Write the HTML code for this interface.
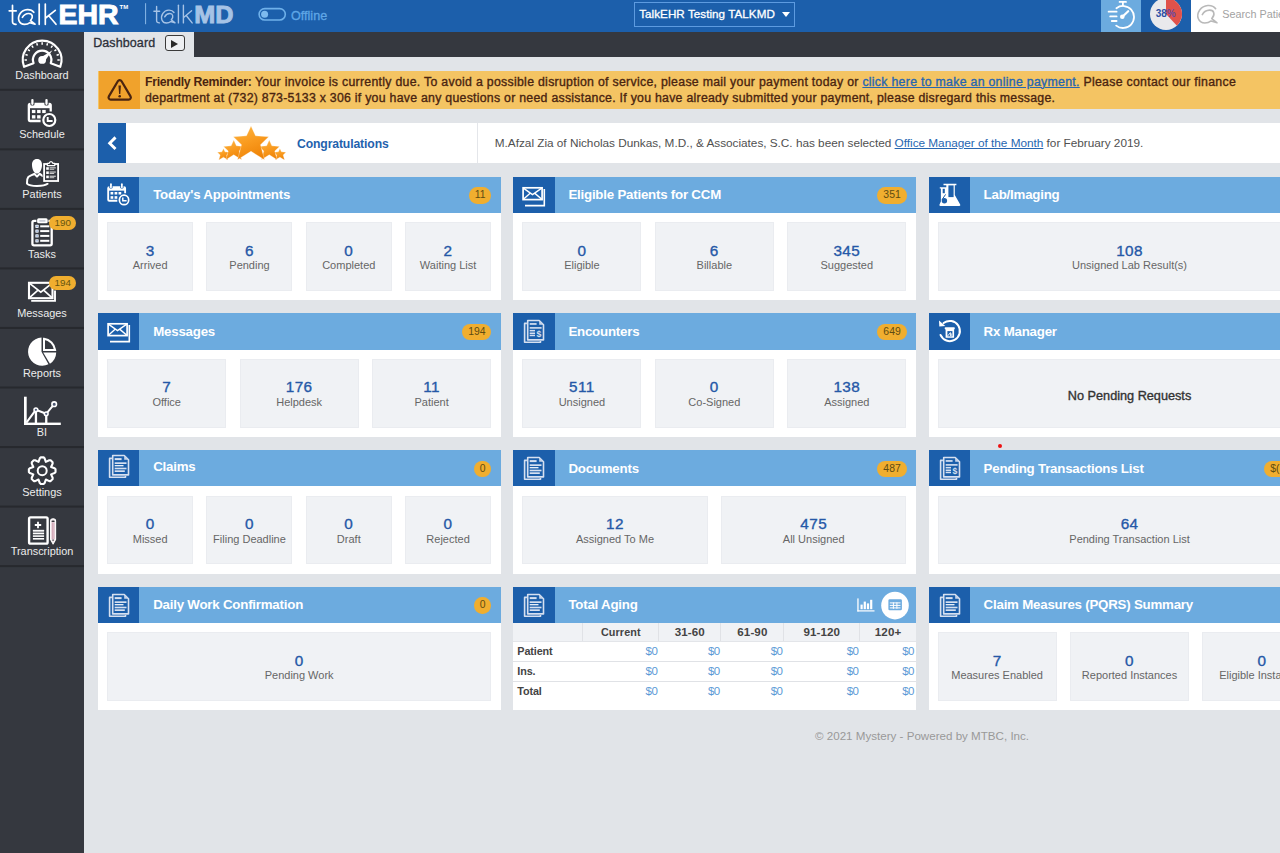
<!DOCTYPE html>
<html>
<head>
<meta charset="utf-8">
<title>talkEHR Dashboard</title>
<style>
*{box-sizing:border-box;margin:0;padding:0}
html,body{width:1280px;height:853px;overflow:hidden}
body{background:#e1e4e8;font-family:"Liberation Sans",sans-serif;position:relative;color:#333}
.abs{position:absolute}
#top{position:absolute;left:0;top:0;width:1280px;height:32px;background:#1c5fab}
#side{position:absolute;left:0;top:32px;width:84px;height:821px;background:#35383f}
#tabbar{position:absolute;left:84px;top:32px;width:1196px;height:25px;background:#35383f}
#tab{position:absolute;left:0;top:0;width:110px;height:25px;background:#e1e4e8;font-size:12.5px;color:#2b2f38;-webkit-text-stroke:0.3px #2b2f38}
#tab span{position:absolute;left:9.2px;top:4.2px;letter-spacing:.1px}
#tabbtn{position:absolute;left:81px;top:3.4px;width:20px;height:16px;border:1px solid #3a3a3a;border-radius:3px;background:#eef0f3}
#tabbtn:after{content:"";position:absolute;left:5.4px;top:3.3px;border-left:7.6px solid #2a2a2a;border-top:4px solid transparent;border-bottom:4px solid transparent}
#sel{left:634px;top:2px;width:160.5px;height:24.5px;border:1px solid #5d9be0;color:#fff;font-size:11.65px;-webkit-text-stroke:.3px #fff}
#sel span{position:absolute;left:4.2px;top:3.7px;white-space:nowrap;letter-spacing:.05px}
#sel i{position:absolute;left:146.6px;top:8.8px;border-top:5.8px solid #fff;border-left:4.2px solid transparent;border-right:4.2px solid transparent}
#timer{left:1101px;top:0;width:39.5px;height:32px;background:#6cabdf}
#search{left:1190.7px;top:0;width:90px;height:32px;background:#fff}
#search span{position:absolute;left:31.6px;top:7.8px;font-size:10.8px;line-height:13px;color:#a2a2a2;white-space:nowrap}
/* sidebar */
.si{position:absolute;left:0;width:84px;height:59.54px;border-bottom:2px solid #26282d}
#sideov{position:absolute;left:0;top:0;width:84px;height:853px}
.lb{position:absolute;left:0;width:84px;text-align:center;color:#ececec;font-size:10.9px;line-height:12px}
.sbadge{position:absolute;left:49.3px;width:26.8px;height:13.9px;border-radius:7px;background:#f0ae2f;color:#66550f;font-size:9.8px;line-height:13.9px;text-align:center}
/* banner */
#banner{position:absolute;left:98px;top:71.2px;width:1190px;height:38px;background:#f4c463}
#banner .ic{position:absolute;left:1px;top:0;width:41px;height:38px;background:#f0a22c}
#banner .tx{position:absolute;left:47px;top:2.4px;width:1180px;font-size:12.3px;line-height:16.3px;color:#4a2410;-webkit-text-stroke:0.35px #4a2410;letter-spacing:.295px;white-space:nowrap}
#banner .tx b{font-weight:bold;-webkit-text-stroke:0;letter-spacing:-.31px}
#banner .tx a{color:#2766b1;text-decoration:underline;-webkit-text-stroke:0.35px #2766b1}
/* congrats */
#cong{position:absolute;left:98px;top:122.6px;width:1190px;height:40.4px;background:#fff}
#cong .bt{position:absolute;left:0;top:0;width:27.5px;height:40.4px;background:#1c5fab}
#cong .dv{position:absolute;left:379px;top:0;width:1px;height:40.4px;background:#e4e6ea}
#cong .cg{position:absolute;left:199px;top:13.2px;font-size:12.2px;line-height:16px;letter-spacing:-.12px;font-weight:bold;color:#1f62ad}
#cong .ms{position:absolute;left:396.8px;top:12px;font-size:11.8px;line-height:16px;letter-spacing:-.02px;color:#505050;white-space:nowrap}
#cong .ms a{color:#2766b1;text-decoration:underline}
/* panels */
.p{position:absolute;width:402.4px;height:123.7px;background:#fff}
.p .h{position:absolute;left:0;top:0;width:100%;height:36.3px;background:#6cabdf}
.p .hi{position:absolute;left:0;top:0;width:41.3px;height:36.3px;background:#1c5fab}
.p .t{position:absolute;left:55px;top:10.7px;font-size:13.3px;line-height:16px;letter-spacing:-.22px;font-weight:bold;color:#fff;white-space:nowrap}
.p .b{position:absolute;right:9.2px;top:10.8px;height:16.3px;min-width:17.2px;padding:0 5.9px;border-radius:8.2px;background:#f0ae2f;color:#5e4c12;font-size:10.4px;line-height:16.5px;text-align:center}
.p .ts{position:absolute;left:9px;top:45.8px;width:383.9px;height:68.6px;display:flex;justify-content:space-between}
.tl{height:68.6px;background:#f0f2f5;border:1px solid #eaecf0;text-align:center}
.c4 .tl{width:86px}
.c3 .tl{width:119px}
.c2 .tl{width:185.2px}
.c1 .tl{width:383.9px}
.tl .n{display:block;margin-top:19.3px;font-size:15.3px;line-height:16px;letter-spacing:.4px;color:#2558a7;-webkit-text-stroke:.35px #2558a7}
.tl .l{display:block;margin-top:-.4px;font-size:11px;line-height:14px;color:#666;white-space:nowrap}
.ag{position:absolute;left:0;top:36.3px;width:402.4px}
.ag i{font-style:normal;display:block;float:left}
.ag .hr{height:19px;background:#f0f2f5;border-bottom:1px solid #e3e5e9}
.ag .hr i{height:18px;border-right:1px solid #e0e2e6;text-align:center;font-weight:bold;font-size:11.6px;line-height:18.6px;color:#444;letter-spacing:.1px}
.ag .r{height:20.25px;border-bottom:1px solid #e0e2e6;clear:both}
.ag .r b{display:block;float:left;width:70px;padding-left:3.9px;font-size:10.8px;line-height:19.8px;color:#444;letter-spacing:-.1px}
.ag .r i{text-align:right;padding-right:2px;font-size:11.5px;line-height:19.8px;color:#5b9ad6;letter-spacing:-.6px}
.tl .np{display:block;margin-top:27.8px;font-size:12.7px;line-height:16px;color:#333;-webkit-text-stroke:.35px #333}
#dot{position:absolute;left:997.55px;top:443.6px;width:4.4px;height:4.4px;border-radius:50%;background:#ee1111}
#foot{position:absolute;left:815px;top:729.1px;font-size:11.6px;color:#999;white-space:nowrap}
</style>
</head>
<body>
<div id="top">
<svg class="abs" style="left:0;top:0" width="340" height="32" viewBox="0 0 340 32">
 <defs><g id="talk" fill="none" stroke-linecap="round" stroke-linejoin="round">
  <path vector-effect="non-scaling-stroke" d="M12.5 5.4 V21.4 Q12.5 24.4 16 24.3"/><path vector-effect="non-scaling-stroke" d="M9.2 10.8 H16.2"/>
  <path id="bub" vector-effect="non-scaling-stroke" d="M33.8 12.3 C31 8.4 23.5 8.6 20.2 13.4 C16.6 18.6 19.2 24.4 24.6 24.4 C27 24.4 28.6 23.7 29.9 22.7 L35 24.2 L30.5 20.6 C33.6 17.4 32.6 13.4 28.6 13.5 C26 13.6 23.6 15.2 22.4 17.3"/>
  <path vector-effect="non-scaling-stroke" d="M39.2 4 V24.3"/>
  <path vector-effect="non-scaling-stroke" d="M45.3 4 V24.3 M45.6 18 L55.3 10.3 M49 16 L56 24.3"/>
 </g></defs>
 <use href="#talk" stroke="#fff" stroke-width="1.7"/>
 <text x="58.5" y="24.4" font-family="Liberation Sans, sans-serif" font-weight="bold" font-size="28.2" fill="#fff" stroke="#fff" stroke-width="1" textLength="60" lengthAdjust="spacingAndGlyphs">EHR</text>
 <text x="119.6" y="9" font-family="Liberation Sans, sans-serif" font-weight="bold" font-size="6" fill="#fff">TM</text>
 <rect x="145" y="3.2" width="1.1" height="21" fill="#7fb0e2"/>
 <use href="#talk" stroke="#a6c3e6" stroke-width="1.4" transform="translate(146.39 1.845) scale(.817 .867)"/>
 <text x="194.3" y="22.8" font-family="Liberation Sans, sans-serif" font-weight="bold" font-size="24" fill="#a6c3e6" stroke="#a6c3e6" stroke-width="0.9" textLength="39.2" lengthAdjust="spacingAndGlyphs">MD</text>
 <rect x="259.1" y="8.6" width="26.2" height="11.4" rx="5.7" fill="none" stroke="#6fb1ea" stroke-width="1.6"/>
 <circle cx="264.6" cy="14.3" r="3.5" fill="#7dbaee"/>
 <text x="291" y="19.8" font-family="Liberation Sans, sans-serif" font-size="12.6" fill="#5fa6e6" stroke="#5fa6e6" stroke-width=".3">Offline</text>
</svg>
<div class="abs" id="sel"><span>TalkEHR Testing TALKMD</span><i></i></div>
<div class="abs" id="timer"><svg width="40" height="32" viewBox="0 0 40 32"><g fill="none" stroke="#fff" stroke-width="1.8" stroke-linecap="round"><path d="M15.4 8.2 A11 11 0 1 1 15.2 25.6"/><path d="M18.6 1.9 H25 M21.9 2.2 V5.6"/><path d="M7.6 11.7 H15.6 M9.2 16.4 H15.6 M10.8 21 H15.6"/></g><path d="M21.4 16.8 L27.2 11.2" stroke="#fff" stroke-width="2.2" stroke-linecap="round"/><circle cx="21.3" cy="16.7" r="2.3" fill="#fff"/></svg></div>
<svg class="abs" style="left:1146px;top:0" width="40" height="32" viewBox="0 0 40 32"><circle cx="20" cy="14" r="16" fill="#e9e9ec"/><path d="M20 14 L20 -2 A16 16 0 0 1 30.95 25.67 Z" fill="#e0524b"/><text x="9.7" y="17.3" font-family="Liberation Sans, sans-serif" font-weight="bold" font-size="10" fill="#2c4fa6" letter-spacing="-0.1">38<tspan fill="#6a4aa0">%</tspan></text></svg>
<div class="abs" id="search"><svg class="abs" style="left:0;top:0" width="40" height="32" viewBox="0 0 40 32"><use href="#bub" fill="none" stroke="#b9b9b9" stroke-width="1.6" stroke-linecap="round" stroke-linejoin="round" transform="translate(-14.9 -5.8) scale(1.17 1.18)"/></svg><span>Search Patie</span></div>
</div>
<div id="side"></div>
<div id="sideov">
<svg class="abs" style="left:0;top:0" width="84" height="853" viewBox="0 0 84 853">
<rect x="0" y="88.80" width="84" height="2" fill="#27292e"/>
<rect x="0" y="148.34" width="84" height="2" fill="#27292e"/>
<rect x="0" y="207.88" width="84" height="2" fill="#27292e"/>
<rect x="0" y="267.42" width="84" height="2" fill="#27292e"/>
<rect x="0" y="326.96" width="84" height="2" fill="#27292e"/>
<rect x="0" y="386.50" width="84" height="2" fill="#27292e"/>
<rect x="0" y="446.04" width="84" height="2" fill="#27292e"/>
<rect x="0" y="505.58" width="84" height="2" fill="#27292e"/>
<rect x="0" y="565.12" width="84" height="2" fill="#27292e"/>
<path d="M24.09 66.83 A19.35 19.35 0 1 1 60.21 66.83 L50.74 63.20 A9.2 9.2 0 1 0 33.56 63.20 Z" fill="none" stroke="#fff" stroke-width="2.2" stroke-linejoin="round"/>
<path d="M24.55 59.90 L26.95 59.90 M25.41 54.46 L27.69 55.20 M27.91 49.55 L29.85 50.97 M31.80 45.66 L33.22 47.60 M36.71 43.16 L37.45 45.44 M42.15 42.30 L42.15 44.70 M47.59 43.16 L46.85 45.44 M52.50 45.66 L51.08 47.60 M56.39 49.55 L54.45 50.97 M58.89 54.46 L56.61 55.20 M59.75 59.90 L57.35 59.90" stroke="#fff" stroke-width="1.5" fill="none"/>
<circle cx="42.15" cy="59.9" r="3.9" fill="#fff"/>
<path d="M40.35 57.699999999999996 L52.4 50.2 L44.55 61.5 Z" fill="#fff"/>
<path d="M40.6 121 H30.2 Q28.85 121 28.85 119.6 V105.2 Q28.85 103.8 30.2 103.8 H49.3 Q50.7 103.8 50.7 105.2 V111.6" fill="none" stroke="#fff" stroke-width="2.3"/>
<rect x="28.8" y="103.6" width="21.9" height="4.6" fill="#fff"/>
<rect x="30.299999999999997" y="98.6" width="4.2" height="6.8" rx="1.5" fill="#35383f"/><rect x="31.25" y="98.9" width="2.3" height="6" rx="1.1" fill="#fff"/>
<rect x="44.4" y="98.6" width="4.2" height="6.8" rx="1.5" fill="#35383f"/><rect x="45.35" y="98.9" width="2.3" height="6" rx="1.1" fill="#fff"/>
<rect x="31.9" y="109.9" width="3.5" height="3.2" fill="#fff"/>
<rect x="37.1" y="109.9" width="3.5" height="3.2" fill="#fff"/>
<rect x="42.2" y="109.9" width="3.5" height="3.2" fill="#fff"/>
<rect x="31.9" y="115.2" width="3.5" height="3.3" fill="#fff"/>
<rect x="37.1" y="115.2" width="3.5" height="3.3" fill="#fff"/>
<circle cx="49.3" cy="120" r="7.6" fill="#35383f"/><circle cx="49.3" cy="120" r="6" fill="none" stroke="#fff" stroke-width="2.2"/>
<path d="M47.7 116.9 V121 H52.6" fill="none" stroke="#fff" stroke-width="1.9"/>
<path d="M37 159 C40.4 159 42.2 161.6 42 165.4 C41.8 169.6 39.6 173.6 37 173.6 C34.4 173.6 32.2 169.6 32 165.4 C31.8 161.6 33.6 159 37 159 Z" fill="#fff"/>
<path d="M42.6 176 C41.4 175 40.4 174.4 39.7 173.8 L37 176.6 L34.3 173.8 C32 175.2 29.4 175.6 28.2 177.2 C26.8 179 27 182 27 183.6 C29 185.6 33 186 37 186 C41 186 45.4 185.6 47.6 183.8" fill="none" stroke="#fff" stroke-width="2" stroke-linejoin="round" stroke-linecap="round"/>
<rect x="42.6" y="162.2" width="17.6" height="20.6" fill="#35383f"/>
<rect x="44.1" y="164" width="14" height="17" fill="none" stroke="#fff" stroke-width="1.8"/>
<path d="M47.3 165.6 V163.4 H49 Q51 160 53 163.4 H54.8 V165.6 Z" fill="#35383f" stroke="#fff" stroke-width="1.2" stroke-linejoin="round"/>
<rect x="46.2" y="167.2" width="2.6" height="2.6" fill="#fff"/><rect x="49.6" y="167.3" width="6.2" height="1.1" fill="#d8d8d8"/><rect x="49.6" y="168.8" width="4.6" height="1" fill="#c8c8c8"/>
<rect x="46.2" y="171.39999999999998" width="2.6" height="2.6" fill="#fff"/><rect x="49.6" y="171.5" width="6.2" height="1.1" fill="#d8d8d8"/><rect x="49.6" y="173.0" width="4.6" height="1" fill="#c8c8c8"/>
<rect x="46.2" y="175.6" width="2.6" height="2.6" fill="#fff"/><rect x="49.6" y="175.70000000000002" width="6.2" height="1.1" fill="#d8d8d8"/><rect x="49.6" y="177.20000000000002" width="4.6" height="1" fill="#c8c8c8"/>
<rect x="32.4" y="220.9" width="19.3" height="24.5" rx="1.6" fill="none" stroke="#fff" stroke-width="2.3"/>
<rect x="36.4" y="217.8" width="12" height="6.4" rx="1.8" fill="#35383f"/><rect x="37.1" y="218.3" width="10.6" height="5" rx="1.6" fill="#fff"/><rect x="39.2" y="220" width="6.4" height="1.7" rx=".8" fill="#c9ccd6"/>
<rect x="35.3" y="224.70000000000002" width="3.4" height="3.2" rx=".6" fill="#e9eef4"/><rect x="36.5" y="225.70000000000002" width="1.1" height="1.2" fill="#5f86c9"/><rect x="40.2" y="225.3" width="9.1" height="2" fill="#fff"/>
<rect x="35.3" y="229.5" width="3.4" height="3.2" rx=".6" fill="#e9eef4"/><rect x="36.5" y="230.5" width="1.1" height="1.2" fill="#5f86c9"/><rect x="40.2" y="230.1" width="9.1" height="2" fill="#fff"/>
<rect x="35.3" y="234.3" width="3.4" height="3.2" rx=".6" fill="#e9eef4"/><rect x="36.5" y="235.3" width="1.1" height="1.2" fill="#5f86c9"/><rect x="40.2" y="234.9" width="9.1" height="2" fill="#fff"/>
<rect x="35.3" y="239.20000000000002" width="3.4" height="3.2" rx=".6" fill="#e9eef4"/><rect x="36.5" y="240.20000000000002" width="1.1" height="1.2" fill="#5f86c9"/><rect x="40.2" y="239.8" width="9.1" height="2" fill="#fff"/>
<path d="M31.2 300.9 H55 V290.6" fill="none" stroke="#fff" stroke-width="1.9"/>
<rect x="29" y="282.8" width="23.5" height="15.4" fill="#35383f" stroke="#fff" stroke-width="2.1"/>
<path d="M29.3 283.2 L40.8 292.2 L52.2 283.2 M29.3 297.8 L38 290.2 M52.2 297.8 L43.6 290.2" fill="none" stroke="#fff" stroke-width="1.7"/>
<path d="M41.5 351.7 L41.5 337.59999999999997 A14.1 14.1 0 1 0 48.47 364.28 Z" fill="#fff"/>
<path d="M43.2 352.4 L56.20 352.4 A14.1 14.1 0 0 1 49.92 363.68 Z" fill="#fff"/>
<path d="M44.0 350.0 V338.80 A13.1 13.1 0 0 1 55.10 350.0 Z" fill="none" stroke="#fff" stroke-width="2" stroke-linejoin="miter"/>
<rect x="24" y="396.7" width="2.7" height="28.3" fill="#fff"/><rect x="24" y="422.6" width="36.8" height="2.4" fill="#fff"/>
<path d="M26.4 422.6 L35.9 409.8 L46.2 413.8 L54.2 404.2" fill="none" stroke="#fff" stroke-width="2"/>
<rect x="34.8" y="411.5" width="2.3" height="11.5" fill="#fff"/><rect x="45.1" y="415.5" width="2.3" height="7.5" fill="#fff"/>
<circle cx="35.9" cy="409.8" r="1.9" fill="#55627f" stroke="#fff" stroke-width="1.5"/><circle cx="46.2" cy="413.8" r="1.9" fill="#55627f" stroke="#fff" stroke-width="1.5"/><circle cx="54.2" cy="404.2" r="2.3" fill="#4b5670" stroke="#fff" stroke-width="1.6"/>
<path d="M38.53 461.83 L39.80 458.33 L40.80 457.37 L43.60 457.37 L44.60 458.33 L45.87 461.83 L49.25 460.25 L50.63 460.29 L52.61 462.27 L52.65 463.65 L51.07 467.03 L54.57 468.30 L55.53 469.30 L55.53 472.10 L54.57 473.10 L51.07 474.37 L52.65 477.75 L52.61 479.13 L50.63 481.11 L49.25 481.15 L45.87 479.57 L44.60 483.07 L43.60 484.03 L40.80 484.03 L39.80 483.07 L38.53 479.57 L35.15 481.15 L33.77 481.11 L31.79 479.13 L31.75 477.75 L33.33 474.37 L29.83 473.10 L28.87 472.10 L28.87 469.30 L29.83 468.30 L33.33 467.03 L31.75 463.65 L31.79 462.27 L33.77 460.29 L35.15 460.25 Z" fill="none" stroke="#fff" stroke-width="2.1" stroke-linejoin="round"/>
<circle cx="42.2" cy="470.7" r="4.5" fill="none" stroke="#fff" stroke-width="2"/>
<rect x="29.1" y="517.4" width="18.5" height="26.2" rx="1.4" fill="none" stroke="#fff" stroke-width="2.4"/>
<path d="M38 521.8 V528.2 M34.8 525 H41.2" stroke="#fff" stroke-width="1.8" fill="none"/>
<rect x="32.9" y="529.9" width="11.2" height="2.4" fill="#b9b9bd"/><rect x="32.9" y="529.9" width="11.2" height="1" fill="#fff"/>
<rect x="32.9" y="532.7" width="11.2" height="1.6" fill="#fff"/>
<rect x="32.9" y="535.3000000000001" width="11.2" height="1.6" fill="#fff"/>
<rect x="32.9" y="538.0" width="11.2" height="1.6" fill="#fff"/>
<path d="M50.6 521 Q50.6 518.8 53.1 518.8 Q55.6 518.8 55.6 521 V539.4 L53.1 544 L50.6 539.4 Z" fill="#f1e6ea" stroke="#fff" stroke-width="1.1" stroke-linejoin="round"/>
<path d="M52.3 522.4 V539 M53.9 522.4 V539" stroke="#c58aa0" stroke-width=".8" fill="none"/><ellipse cx="53.1" cy="521.3" rx="1.7" ry=".8" fill="#24262b"/><rect x="52.2" y="539.6" width="1.8" height="1" fill="#35383f"/>
</svg>
<div class="lb" style="top:68.90px">Dashboard</div>
<div class="lb" style="top:128.44px">Schedule</div>
<div class="lb" style="top:187.98px">Patients</div>
<div class="lb" style="top:247.52px">Tasks</div>
<div class="lb" style="top:307.06px">Messages</div>
<div class="lb" style="top:366.60px">Reports</div>
<div class="lb" style="top:426.14px">BI</div>
<div class="lb" style="top:485.68px">Settings</div>
<div class="lb" style="top:545.22px">Transcription</div>
<div class="sbadge" style="top:216.1px">190</div>
<div class="sbadge" style="top:275.7px">194</div>
</div>
<div id="tabbar"><div id="tab"><span>Dashboard</span><div id="tabbtn"></div></div></div>
<div id="main">
<div id="banner"><div class="ic"><svg class="abs" style="left:-1px;top:0" width="42" height="38" viewBox="0 0 42 38"><path d="M19.81 10.20 A2.2 2.2 0 0 1 23.59 10.20 L32.54 25.33 A2.2 2.2 0 0 1 30.64 28.65 L12.76 28.65 A2.2 2.2 0 0 1 10.86 25.33 Z" fill="none" stroke="#4a2410" stroke-width="2.2"/><path d="M20.45 14.6 H22.95 L22.3 23 H21.1 Z" fill="#4a2410"/><circle cx="21.7" cy="25.3" r="1.3" fill="#4a2410"/></svg></div>
<div class="tx"><b>Friendly Reminder:</b> Your invoice is currently due. To avoid a possible disruption of service, please mail your payment today or <a>click here to make an online payment.</a> Please contact our finance<br><span style="letter-spacing:.272px">department at (732) 873-5133 x 306 if you have any questions or need assistance. If you have already submitted your payment, please disregard this message.</span></div></div>
<div id="cong"><div class="bt"><svg width="28" height="41" viewBox="0 0 28 41"><path d="M17.5 14.4 L11.7 20.2 L17.5 26" fill="none" stroke="#fff" stroke-width="2.9"/></svg></div>
<svg class="abs" style="left:110px;top:0" width="90" height="41" viewBox="208 122.9 90 41"><defs><linearGradient id="sg" x1="0.2" y1="0" x2="0.6" y2="1"><stop offset="0" stop-color="#fdb440"/><stop offset=".5" stop-color="#f99a1e"/><stop offset="1" stop-color="#ee8206"/></linearGradient></defs><path d="M223.45 148.35 L225.00 151.73 L229.56 152.08 L226.73 154.80 L228.11 160.01 L223.45 157.08 L218.79 160.01 L220.17 154.80 L217.34 152.08 L221.90 151.73 Z" fill="url(#sg)" stroke="#fff" stroke-width=".3" stroke-linejoin="round"/><path d="M279.90 148.35 L281.45 151.73 L286.01 152.08 L283.18 154.80 L284.56 160.01 L279.90 157.08 L275.24 160.01 L276.62 154.80 L273.79 152.08 L278.35 151.73 Z" fill="url(#sg)" stroke="#fff" stroke-width=".3" stroke-linejoin="round"/><path d="M233.75 140.01 L236.36 145.70 L244.02 146.28 L239.26 150.86 L241.58 159.62 L233.75 154.69 L225.92 159.62 L228.24 150.86 L223.48 146.28 L231.14 145.70 Z" fill="url(#sg)" stroke="#fff" stroke-width=".3" stroke-linejoin="round"/><path d="M269.25 140.01 L271.86 145.70 L279.52 146.28 L274.76 150.86 L277.08 159.62 L269.25 154.69 L261.42 159.62 L263.74 150.86 L258.98 146.28 L266.64 145.70 Z" fill="url(#sg)" stroke="#fff" stroke-width=".3" stroke-linejoin="round"/><path d="M251.00 125.90 L255.50 135.70 L268.70 136.70 L260.50 144.60 L264.50 159.70 L251.00 151.20 L237.50 159.70 L241.50 144.60 L233.30 136.70 L246.50 135.70 Z" fill="url(#sg)" stroke="#fff" stroke-width=".3" stroke-linejoin="round"/></svg><div class="cg">Congratulations</div><div class="dv"></div>
<div class="ms">M.Afzal Zia of Nicholas Dunkas, M.D., &amp; Associates, S.C. has been selected <a>Office Manager of the Month</a> for February 2019.</div></div>

<div class="p c4" style="left:98.2px;top:176.7px"><div class="h"></div><div class="hi"><svg class="abs" style="left:0;top:0px" width="42" height="37" viewBox="0 0 42 37"><g transform="translate(9.3 9.3) scale(.775 .79) translate(-27.7 -102.7)">
<path d="M40.6 121 H30.2 Q28.85 121 28.85 119.6 V105.2 Q28.85 103.8 30.2 103.8 H49.3 Q50.7 103.8 50.7 105.2 V111.6" fill="none" stroke="#fff" stroke-width="2.4"/>
<rect x="28.8" y="103.6" width="21.9" height="4.6" fill="#fff"/>
<rect x="30.3" y="98.6" width="4.2" height="6.8" rx="1.5" fill="#1c5fab"/><rect x="31.25" y="98.9" width="2.3" height="6" rx="1.1" fill="#fff"/>
<rect x="44.4" y="98.6" width="4.2" height="6.8" rx="1.5" fill="#1c5fab"/><rect x="45.35" y="98.9" width="2.3" height="6" rx="1.1" fill="#fff"/>
<rect x="31.9" y="109.9" width="3.5" height="3.2" fill="#fff"/><rect x="37.1" y="109.9" width="3.5" height="3.2" fill="#fff"/><rect x="42.2" y="109.9" width="3.5" height="3.2" fill="#fff"/>
<rect x="31.9" y="115.2" width="3.5" height="3.3" fill="#fff"/><rect x="37.1" y="115.2" width="3.5" height="3.3" fill="#fff"/>
<circle cx="49.3" cy="120" r="7.7" fill="#1c5fab"/><circle cx="49.3" cy="120" r="6" fill="none" stroke="#fff" stroke-width="2.2"/>
<path d="M47.7 116.9 V121 H52.6" fill="none" stroke="#fff" stroke-width="1.9"/></g></svg></div><div class="t">Today's Appointments</div><div class="b">11</div>
<div class="ts"><div class="tl"><span class="n">3</span><span class="l">Arrived</span></div><div class="tl"><span class="n">6</span><span class="l">Pending</span></div><div class="tl"><span class="n">0</span><span class="l">Completed</span></div><div class="tl"><span class="n">2</span><span class="l">Waiting List</span></div></div></div>

<div class="p c3" style="left:513.4px;top:176.7px"><div class="h"></div><div class="hi"><svg class="abs" style="left:0;top:0px" width="42" height="37" viewBox="0 0 42 37"><path d="M12 28.6 H31.3 V12" fill="none" stroke="#fff" stroke-width="1.6"/>
<rect x="10.1" y="10.8" width="19" height="11.8" fill="#1c5fab" stroke="#fff" stroke-width="1.7"/>
<path d="M10.4 11.1 L19.5 17.6 L28.8 11.1 M10.4 22.3 L17.4 16.1 M28.8 22.3 L21.6 16.1" fill="none" stroke="#fff" stroke-width="1.4"/></svg></div><div class="t">Eligible Patients for CCM</div><div class="b">351</div>
<div class="ts"><div class="tl"><span class="n">0</span><span class="l">Eligible</span></div><div class="tl"><span class="n">6</span><span class="l">Billable</span></div><div class="tl"><span class="n">345</span><span class="l">Suggested</span></div></div></div>

<div class="p c1" style="left:928.6px;top:176.7px"><div class="h"></div><div class="hi"><svg class="abs" style="left:0;top:0px" width="42" height="37" viewBox="0 0 42 37"><path d="M14.5 6.7 H27.4 V8.2 H25.8 V18 L31.2 27.6 Q31.8 29 30.3 29 H11.4 Q9.9 29 10.5 27.6 L11.9 24.6 V11.5 H10.8 V10.3 H17.3 V8.2 H14.5 Z" fill="#fff"/>
<rect x="19.4" y="8.4" width="5.2" height="11.7" fill="#1c5fab"/>
<rect x="13.7" y="11.8" width="2.1" height="4.4" fill="#1c5fab"/>
<circle cx="15.4" cy="23.7" r="2.7" fill="#1c5fab"/>
<path d="M13.1 22.6 L16.6 17.4" stroke="#1c5fab" stroke-width="1" fill="none"/></svg></div><div class="t">Lab/Imaging</div>
<div class="ts"><div class="tl"><span class="n">108</span><span class="l">Unsigned Lab Result(s)</span></div></div></div>

<div class="p c3" style="left:98.2px;top:313.3px"><div class="h"></div><div class="hi"><svg class="abs" style="left:0;top:0px" width="42" height="37" viewBox="0 0 42 37"><path d="M12 28.6 H31.3 V12" fill="none" stroke="#fff" stroke-width="1.6"/>
<rect x="10.1" y="10.8" width="19" height="11.8" fill="#1c5fab" stroke="#fff" stroke-width="1.7"/>
<path d="M10.4 11.1 L19.5 17.6 L28.8 11.1 M10.4 22.3 L17.4 16.1 M28.8 22.3 L21.6 16.1" fill="none" stroke="#fff" stroke-width="1.4"/></svg></div><div class="t">Messages</div><div class="b">194</div>
<div class="ts"><div class="tl"><span class="n">7</span><span class="l">Office</span></div><div class="tl"><span class="n">176</span><span class="l">Helpdesk</span></div><div class="tl"><span class="n">11</span><span class="l">Patient</span></div></div></div>

<div class="p c3" style="left:513.4px;top:313.3px"><div class="h"></div><div class="hi"><svg class="abs" style="left:0;top:0px" width="42" height="37" viewBox="0 0 42 37"><g fill="none" stroke="#d6e0f0" stroke-width="1.6" stroke-linejoin="round"><path d="M13.9 10.4 H11.6 V29.3 H27.5 V28"/><path d="M14.7 7.5 H26.2 L30.5 11.8 V26.9 H14.7 Z"/></g>
<path d="M26.2 7.5 V11.8 H30.5 Z" fill="#c6d4ea"/><g fill="#d6e0f0"><rect x="16.7" y="10.1" width="6.9" height="1.7"/><rect x="16.7" y="14.1" width="11.9" height="1.6"/><rect x="16.7" y="16.9" width="5.3" height="1.5"/><rect x="16.7" y="19.5" width="5.3" height="1.5"/><rect x="16.7" y="21.7" width="5.3" height="1.5"/></g>
<text x="23.6" y="24.4" font-family="Liberation Sans, sans-serif" font-weight="bold" font-size="8.6" fill="#d6e0f0">$</text></svg></div><div class="t">Encounters</div><div class="b">649</div>
<div class="ts"><div class="tl"><span class="n">511</span><span class="l">Unsigned</span></div><div class="tl"><span class="n">0</span><span class="l">Co-Signed</span></div><div class="tl"><span class="n">138</span><span class="l">Assigned</span></div></div></div>

<div class="p c1" style="left:928.6px;top:313.3px"><div class="h"></div><div class="hi"><svg class="abs" style="left:0;top:0px" width="42" height="37" viewBox="0 0 42 37"><path d="M14.58 10.04 A10.1 10.1 0 1 1 11.50 21.95" fill="none" stroke="#fff" stroke-width="2" stroke-linecap="round"/>
<path d="M10 7.4 L10.3 13.4 L16.3 13.1 Z" fill="#fff"/>
<rect x="15.7" y="14.2" width="10.1" height="2.2" rx=".8" fill="#fff"/><rect x="16.6" y="16" width="8.5" height="8.8" rx=".6" fill="#fff"/><rect x="18.4" y="18.1" width="5" height="5.2" fill="#1c5fab"/>
<path d="M18.6 23 L21.4 19.6 V23 M22.2 20.4 V23.2" stroke="#fff" stroke-width=".9" fill="none"/></svg></div><div class="t">Rx Manager</div>
<div class="ts"><div class="tl"><span class="np">No Pending Requests</span></div></div></div>

<div class="p c4" style="left:98.2px;top:449.9px"><div class="h"></div><div class="hi"><svg class="abs" style="left:0;top:-1.8px" width="42" height="37" viewBox="0 0 42 37"><g fill="none" stroke="#d6e0f0" stroke-width="1.6" stroke-linejoin="round"><path d="M13.9 10.4 H11.6 V29.3 H27.5 V28"/><path d="M14.7 7.5 H26.2 L30.5 11.8 V26.9 H14.7 Z"/></g>
<path d="M26.2 7.5 V11.8 H30.5 Z" fill="#c6d4ea"/><g fill="#d6e0f0"><rect x="16.7" y="10.1" width="6.9" height="2"/><rect x="16.7" y="14.3" width="11.8" height="1.7"/><rect x="16.7" y="17.1" width="8.8" height="1.2" fill="#fff"/><rect x="16.7" y="19.7" width="11.8" height="1.6"/><rect x="16.7" y="22.3" width="10.1" height="1.7"/></g></svg></div><div class="t" style="top:8.9px">Claims</div><div class="b">0</div>
<div class="ts"><div class="tl"><span class="n">0</span><span class="l">Missed</span></div><div class="tl"><span class="n">0</span><span class="l">Filing Deadline</span></div><div class="tl"><span class="n">0</span><span class="l">Draft</span></div><div class="tl"><span class="n">0</span><span class="l">Rejected</span></div></div></div>

<div class="p c2" style="left:513.4px;top:449.9px"><div class="h"></div><div class="hi"><svg class="abs" style="left:0;top:0px" width="42" height="37" viewBox="0 0 42 37"><g fill="none" stroke="#d6e0f0" stroke-width="1.6" stroke-linejoin="round"><path d="M13.9 10.4 H11.6 V29.3 H27.5 V28"/><path d="M14.7 7.5 H26.2 L30.5 11.8 V26.9 H14.7 Z"/></g>
<path d="M26.2 7.5 V11.8 H30.5 Z" fill="#c6d4ea"/><g fill="#d6e0f0"><rect x="16.7" y="10.1" width="6.9" height="2"/><rect x="16.7" y="14.3" width="11.8" height="1.7"/><rect x="16.7" y="17.1" width="8.8" height="1.2" fill="#fff"/><rect x="16.7" y="19.7" width="11.8" height="1.6"/><rect x="16.7" y="22.3" width="10.1" height="1.7"/></g></svg></div><div class="t">Documents</div><div class="b">487</div>
<div class="ts"><div class="tl"><span class="n">12</span><span class="l">Assigned To Me</span></div><div class="tl"><span class="n">475</span><span class="l">All Unsigned</span></div></div></div>

<div class="p c1" style="left:928.6px;top:449.9px"><div class="h"></div><div class="hi"><svg class="abs" style="left:0;top:0px" width="42" height="37" viewBox="0 0 42 37"><g fill="none" stroke="#d6e0f0" stroke-width="1.6" stroke-linejoin="round"><path d="M13.9 10.4 H11.6 V29.3 H27.5 V28"/><path d="M14.7 7.5 H26.2 L30.5 11.8 V26.9 H14.7 Z"/></g>
<path d="M26.2 7.5 V11.8 H30.5 Z" fill="#c6d4ea"/><g fill="#d6e0f0"><rect x="16.7" y="10.1" width="6.9" height="1.7"/><rect x="16.7" y="14.1" width="11.9" height="1.6"/><rect x="16.7" y="16.9" width="5.3" height="1.5"/><rect x="16.7" y="19.5" width="5.3" height="1.5"/><rect x="16.7" y="21.7" width="5.3" height="1.5"/></g>
<text x="23.6" y="24.4" font-family="Liberation Sans, sans-serif" font-weight="bold" font-size="8.6" fill="#d6e0f0">$</text></svg></div><div class="t">Pending Transactions List</div><div class="b" style="right:auto;left:335px;width:60px;text-align:left;padding-left:6.6px">$(</div>
<div class="ts"><div class="tl"><span class="n">64</span><span class="l">Pending Transaction List</span></div></div></div>

<div class="p c1" style="left:98.2px;top:586.5px"><div class="h"></div><div class="hi"><svg class="abs" style="left:0;top:0px" width="42" height="37" viewBox="0 0 42 37"><g fill="none" stroke="#d6e0f0" stroke-width="1.6" stroke-linejoin="round"><path d="M13.9 10.4 H11.6 V29.3 H27.5 V28"/><path d="M14.7 7.5 H26.2 L30.5 11.8 V26.9 H14.7 Z"/></g>
<path d="M26.2 7.5 V11.8 H30.5 Z" fill="#c6d4ea"/><g fill="#d6e0f0"><rect x="16.7" y="10.1" width="6.9" height="2"/><rect x="16.7" y="14.3" width="11.8" height="1.7"/><rect x="16.7" y="17.1" width="8.8" height="1.2" fill="#fff"/><rect x="16.7" y="19.7" width="11.8" height="1.6"/><rect x="16.7" y="22.3" width="10.1" height="1.7"/></g></svg></div><div class="t">Daily Work Confirmation</div><div class="b">0</div>
<div class="ts"><div class="tl"><span class="n">0</span><span class="l">Pending Work</span></div></div></div>

<div class="p" id="aging" style="left:513.4px;top:586.5px"><div class="h"></div><div class="hi"><svg class="abs" style="left:0;top:0px" width="42" height="37" viewBox="0 0 42 37"><g fill="none" stroke="#d6e0f0" stroke-width="1.6" stroke-linejoin="round"><path d="M13.9 10.4 H11.6 V29.3 H27.5 V28"/><path d="M14.7 7.5 H26.2 L30.5 11.8 V26.9 H14.7 Z"/></g>
<path d="M26.2 7.5 V11.8 H30.5 Z" fill="#c6d4ea"/><g fill="#d6e0f0"><rect x="16.7" y="10.1" width="6.9" height="2"/><rect x="16.7" y="14.3" width="11.8" height="1.7"/><rect x="16.7" y="17.1" width="8.8" height="1.2" fill="#fff"/><rect x="16.7" y="19.7" width="11.8" height="1.6"/><rect x="16.7" y="22.3" width="10.1" height="1.7"/></g></svg></div><div class="t">Total Aging</div>
<svg class="abs" style="left:340px;top:0" width="62" height="37" viewBox="0 0 62 37"><g fill="#fff"><rect x="4.3" y="11.4" width="1.3" height="13.1"/><rect x="4.3" y="23.3" width="17.2" height="1.2"/><rect x="7.5" y="17.6" width="2.2" height="4.6"/><rect x="10.7" y="14.6" width="2.2" height="7.6"/><rect x="13.9" y="16.4" width="2.2" height="5.8"/><rect x="17.1" y="12.8" width="2.2" height="9.4"/></g><circle cx="42" cy="18.6" r="13.8" fill="#fff"/><rect x="35.4" y="12.2" width="13.5" height="11" rx="1.3" fill="#6cabdf"/><g fill="#fff"><rect x="36.8" y="15.4" width="10.7" height="1"/><rect x="36.8" y="17.9" width="10.7" height="1"/><rect x="36.8" y="20.4" width="10.7" height="1"/><rect x="39.9" y="15.4" width="1" height="6.4"/><rect x="43.4" y="15.4" width="1" height="6.4"/></g></svg>
<div class="ag">
<div class="hr"><i style="width:70px"></i><i style="width:75.8px;font-size:10.8px">Current</i><i style="width:62.3px">31-60</i><i style="width:62.8px">61-90</i><i style="width:76.1px">91-120</i><i style="width:55.4px;border-right:0">120+</i></div>
<div class="r"><b>Patient</b><i style="width:75.8px">$0</i><i style="width:62.3px">$0</i><i style="width:62.8px">$0</i><i style="width:76.1px">$0</i><i style="width:55.4px">$0</i></div>
<div class="r"><b>Ins.</b><i style="width:75.8px">$0</i><i style="width:62.3px">$0</i><i style="width:62.8px">$0</i><i style="width:76.1px">$0</i><i style="width:55.4px">$0</i></div>
<div class="r" style="border-bottom:0"><b>Total</b><i style="width:75.8px">$0</i><i style="width:62.3px">$0</i><i style="width:62.8px">$0</i><i style="width:76.1px">$0</i><i style="width:55.4px">$0</i></div>
</div>
</div>

<div class="p c3" style="left:928.6px;top:586.5px"><div class="h"></div><div class="hi"><svg class="abs" style="left:0;top:0px" width="42" height="37" viewBox="0 0 42 37"><g fill="none" stroke="#d6e0f0" stroke-width="1.6" stroke-linejoin="round"><path d="M13.9 10.4 H11.6 V29.3 H27.5 V28"/><path d="M14.7 7.5 H26.2 L30.5 11.8 V26.9 H14.7 Z"/></g>
<path d="M26.2 7.5 V11.8 H30.5 Z" fill="#c6d4ea"/><g fill="#d6e0f0"><rect x="16.7" y="10.1" width="6.9" height="2"/><rect x="16.7" y="14.3" width="11.8" height="1.7"/><rect x="16.7" y="17.1" width="8.8" height="1.2" fill="#fff"/><rect x="16.7" y="19.7" width="11.8" height="1.6"/><rect x="16.7" y="22.3" width="10.1" height="1.7"/></g></svg></div><div class="t">Claim Measures (PQRS) Summary</div>
<div class="ts"><div class="tl"><span class="n">7</span><span class="l">Measures Enabled</span></div><div class="tl"><span class="n">0</span><span class="l">Reported Instances</span></div><div class="tl"><span class="n">0</span><span class="l">Eligible Instances</span></div></div></div>
</div>
<div id="dot"></div>
<div id="foot">© 2021 Mystery - Powered by MTBC, Inc.</div>
</body>
</html>
